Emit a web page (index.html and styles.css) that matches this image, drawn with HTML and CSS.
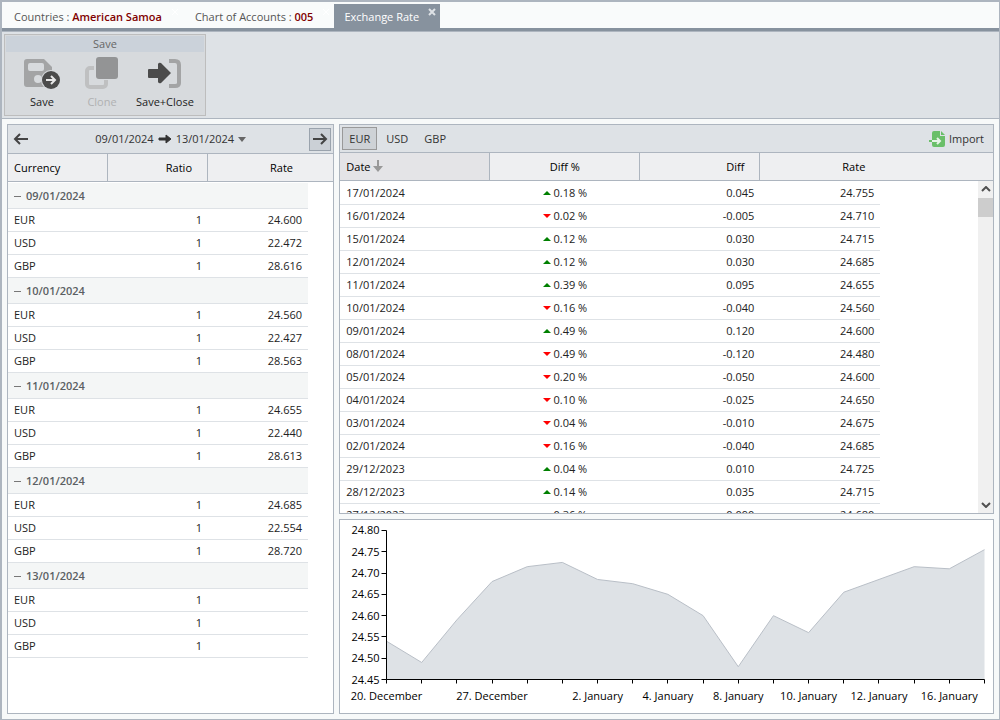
FILE: index.html
```html
<!DOCTYPE html>
<html lang="en">
<head>
    <meta charset="UTF-8">
    <meta name="viewport" content="width=device-width, initial-scale=1.0">
    <title>Exchange Rate</title>
    <link rel="stylesheet" href="styles.css">
</head>
<body>
    <nav class="tabs">
        <div class="tab">
            <a href="#countries">Countries : <b>American Samoa</b></a>
            <button class="tab-close" aria-label="Close Countries">
                <svg width="8" height="8" viewBox="0 0 8 8"><path d="M1 1l6 6M7 1l-6 6"/></svg>
            </button>
        </div>
        <div class="tab">
            <a href="#accounts">Chart of Accounts : <b>005</b></a>
            <button class="tab-close" aria-label="Close Chart of Accounts">
                <svg width="8" height="8" viewBox="0 0 8 8"><path d="M1 1l6 6M7 1l-6 6"/></svg>
            </button>
        </div>
        <div class="tab active">
            <a href="#rates">Exchange Rate</a>
            <button class="tab-close" aria-label="Close Exchange Rate">
                <svg width="8" height="8" viewBox="0 0 8 8"><path d="M1 1l6 6M7 1l-6 6"/></svg>
            </button>
        </div>
    </nav>

    <header class="ribbon">
        <section class="ribbon-group">
            <h2>Save</h2>
            <div class="ribbon-buttons">
                <button>
                    <svg width="40" height="36" viewBox="0 0 40 36">
                        <path fill="#a3a4a5" fill-rule="evenodd" d="M5 3h17l8 8v17q0 3-3 3H5q-3 0-3-3V6q0-3 3-3zM8 7q-2 0-2 2v4q0 2 2 2h12q2 0 2-2V9q0-2-2-2zM16 19a4 4 0 1 0 0 8a4 4 0 1 0 0-8z"/>
                        <circle cx="29" cy="24" r="10" fill="#d7dadd"/>
                        <circle cx="29" cy="24" r="9" fill="#4b4b4b"/>
                        <path d="M24 24h9M29 20l4 4-4 4" fill="none" stroke="#e8e8e8" stroke-width="2"/>
                    </svg>
                    <span>Save</span>
                </button>
                <button disabled>
                    <svg width="40" height="36" viewBox="0 0 40 36">
                        <rect x="5" y="12" width="19" height="19" rx="3" fill="none" stroke="#bfc0c1" stroke-width="4"/>
                        <rect x="12" y="0" width="24" height="24" rx="4" fill="#d7dadd"/>
                        <rect x="14" y="1" width="22" height="22" rx="3" fill="#939495"/>
                    </svg>
                    <span>Clone</span>
                </button>
                <button>
                    <svg width="40" height="36" viewBox="0 0 40 36">
                        <path d="M24 5h6q4 0 4 4v18q0 3-4 3h-6" fill="none" stroke="#a3a4a5" stroke-width="4"/>
                        <path d="M4 13h9V8q1-2 3-1l10 10-10 10q-2 1-3-1v-4H4q-1 0-1-1v-7q0-1 1-1z" fill="#4b4b4b"/>
                    </svg>
                    <span>Save+Close</span>
                </button>
            </div>
        </section>
    </header>

    <main class="content">
        <section class="panel">
            <div class="range-bar">
                <button class="step" aria-label="Previous period">
                    <svg width="16" height="14" viewBox="0 0 16 14"><path d="M15 7H2M7 2L2 7l5 5"/></svg>
                </button>
                <button class="range">
                    09/01/2024
                    <svg width="14" height="10" viewBox="0 0 14 10"><path d="M1 4h7V1l5 4-5 4V6H1z" fill="#333" stroke="#333"/></svg>
                    13/01/2024
                    <svg class="caret" width="8" height="5" viewBox="0 0 8 5"><path d="M0 0h8L4 5z" fill="#666"/></svg>
                </button>
                <button class="step next" aria-label="Next period">
                    <svg width="16" height="14" viewBox="0 0 16 14"><path d="M1 7h13M9 2l5 5-5 5"/></svg>
                </button>
            </div>
            <table class="grid currencies">
                <colgroup><col class="c100"><col class="c100"><col class="c100"><col></colgroup>
                <thead>
                    <tr><th>Currency</th><th class="num">Ratio</th><th class="num last">Rate</th><th></th></tr>
                </thead>
                <tbody id="currencyRows"></tbody>
            </table>
        </section>

        <div class="side">
            <section class="panel history">
                <div class="currency-bar">
                    <button class="selected">EUR</button>
                    <button>USD</button>
                    <button>GBP</button>
                    <button class="import">
                        <svg width="16" height="16" viewBox="0 0 16 16">
                            <path d="M5 0h6v5h5v9q0 2-2 2H5q-2 0-2-2V2q0-2 2-2z" fill="#6abf69"/>
                            <path d="M12 0l4 4h-4z" fill="#6abf69"/>
                            <path d="M0 10h3" stroke="#6abf69" stroke-width="2"/>
                            <path d="M3 10h8M8 7l3 3-3 3" fill="none" stroke="#e6f3e6" stroke-width="2"/>
                        </svg>
                        Import
                    </button>
                </div>
                <table class="grid rates">
                    <colgroup><col class="c150"><col class="c150"><col class="c120"><col class="c120"><col></colgroup>
                    <thead>
                        <tr>
                            <th class="sorted">Date
                                <svg width="10" height="12" viewBox="0 0 10 12"><path d="M4 0h2v6h4l-5 6-5-6h4z" fill="#999"/></svg>
                            </th>
                            <th class="mid">Diff %</th>
                            <th class="num">Diff</th>
                            <th class="num last">Rate</th>
                            <th></th>
                        </tr>
                    </thead>
                    <tbody id="rateRows"></tbody>
                </table>
                <div class="scrollbar">
                    <svg width="10" height="6" viewBox="0 0 10 6"><path d="M1 5l4-4 4 4"/></svg>
                    <div class="thumb"></div>
                    <svg width="10" height="6" viewBox="0 0 10 6"><path d="M1 1l4 4 4-4"/></svg>
                </div>
            </section>
            <section class="panel">
                <svg id="chart" class="chart" role="img" aria-label="EUR exchange rate"></svg>
            </section>
        </div>
    </main>

    <script src="script.js"></script>
</body>
</html>
```
FILE: styles.css
```css
* {
    box-sizing: border-box;
}

body {
    display: flex;
    flex-direction: column;
    height: 100vh;
    margin: 0;
    border: 1px solid #adb5bf;
    border-top-width: 2px;
    border-left-width: 2px;
    background-color: #f7f9f9;
    color: #222;
    font-family: "Open Sans", "Noto Sans", sans-serif;
    font-size: 11px;
    line-height: 16px;
}

button {
    margin: 0;
    padding: 0;
    border: 0;
    background: none;
    color: inherit;
    font: inherit;
    cursor: pointer;
}

/* Tabs */
.tabs {
    display: flex;
    padding-top: 2px;
    background-color: #f9fbfb;
    border-bottom: 3px solid #87929e;
}

.tab {
    display: flex;
    align-items: flex-start;
    gap: 9px;
    height: 24px;
    padding: 0 4px 0 12px;
}

.tab a {
    padding-top: 5px;
    color: #555;
    text-decoration: none;
}

.tab b {
    color: #800000;
    font-weight: 600;
}

.tab-close {
    display: flex;
    padding-top: 4px;
}

.tab-close svg {
    fill: none;
    stroke: #fff;
}

.tab.active {
    padding-left: 10px;
    background-color: #87929e;
}

.tab.active a {
    color: #fff;
}

.tab.active .tab-close svg {
    stroke: #dee2e6;
    stroke-width: 2;
}

/* Ribbon */
.ribbon {
    display: flex;
    padding: 2px;
    border-top: 1px solid #adb5bf;
    border-bottom: 1px solid #adb5bf;
    background-color: #dee2e6;
}

.ribbon-group {
    height: 82px;
    padding: 1px;
    border: 1px solid #bdbdbd;
    background-color: #d7dadd;
}

.ribbon-group h2 {
    margin: 0;
    background-color: #cbd2da;
    color: #666;
    font-size: 11px;
    font-weight: normal;
    text-align: center;
}

.ribbon-buttons {
    display: flex;
    padding: 0 6px;
}

.ribbon-buttons button {
    display: flex;
    flex-direction: column;
    align-items: center;
    gap: 2px;
    min-width: 60px;
    padding: 4px 4px 0;
}

.ribbon-buttons button:disabled {
    color: #b0b1b2;
}

/* Panels */
.content {
    display: grid;
    grid-template-columns: 1fr 2fr;
    gap: 5px;
    flex: 1;
    min-height: 0;
    padding: 5px;
}

.side {
    display: grid;
    grid-template-rows: 2fr 1fr;
    gap: 5px;
    min-height: 0;
}

.panel {
    position: relative;
    min-height: 0;
    overflow: hidden;
    border: 1px solid #adb5bf;
    background-color: #fff;
}

.range-bar,
.currency-bar {
    display: flex;
    align-items: center;
    height: 28px;
    padding: 2px;
    background-color: #dee2e6;
    color: #333;
}

.range-bar {
    justify-content: space-between;
}

.step {
    display: flex;
    align-items: center;
    justify-content: center;
    width: 22px;
    height: 23px;
}

.step svg {
    fill: none;
    stroke: #444;
    stroke-width: 2;
}

.step.next {
    border: 1px solid #9aa3ad;
    background-color: #cbd0d6;
}

.range {
    display: flex;
    align-items: center;
    gap: 4px;
}

.currency-bar {
    gap: 2px;
    height: 27px;
}

.currency-bar button {
    height: 23px;
    padding: 0 6px;
    border: 1px solid transparent;
}

.currency-bar .selected {
    border-color: #999;
    background-color: #ced2d6;
}

.currency-bar .import {
    display: flex;
    align-items: center;
    gap: 4px;
    margin-left: auto;
}

/* Grids */
.grid {
    width: 100%;
    border-collapse: separate;
    border-spacing: 0;
    table-layout: fixed;
}

.c100 {
    width: 100px;
}

.c120 {
    width: 120px;
}

.c150 {
    width: 150px;
}

.grid th {
    height: 29px;
    padding: 0 15px 0 6px;
    border: 1px solid #adb5bf;
    border-width: 1px 1px 1px 0;
    background-color: #eeeff1;
    color: #000;
    font-weight: normal;
    text-align: left;
}

.grid th.last,
.grid th:last-child {
    border-right: 0;
}

.grid th.sorted {
    background-color: #e4e4e7;
}

.grid th svg {
    vertical-align: -1px;
}

.grid td {
    height: 23px;
    padding: 0 6px;
    border-bottom: 1px solid #dee2e6;
}

.grid .group td {
    height: 26px;
    background-color: #f4f6f6;
    color: #5b5f63;
    font-weight: 600;
}

.grid td:last-child,
.grid .group td:last-child {
    padding: 0;
    border: 0;
    background-color: #fff;
}

/* Gap between the header and the first row */
.grid tbody tr:first-child td {
    height: 24px;
    border-top: 1px solid #fff;
}

.grid tbody tr.group:first-child td {
    height: 27px;
}

.grid .num {
    text-align: right;
}

.grid .mid {
    padding: 0;
    text-align: center;
}

.group svg {
    margin-right: 5px;
    vertical-align: 3px;
}

.rates td svg {
    margin-right: 2px;
    vertical-align: 2px;
}

/* Scrollbar lies over the free column of the grid */
.scrollbar {
    position: absolute;
    top: 56px;
    right: 0;
    bottom: 0;
    display: flex;
    flex-direction: column;
    align-items: center;
    width: 15px;
    padding: 5px 0;
    background-color: #f0f0f0;
}

.scrollbar svg {
    fill: none;
    stroke: #505050;
    stroke-width: 2;
}

.thumb {
    width: 15px;
    height: 19px;
    margin: 6px 0 auto;
    background-color: #cdcdcd;
}

/* Chart */
.chart {
    display: block;
    width: 100%;
    height: 100%;
}

.chart text {
    fill: #000;
    font-size: 11px;
}

.chart .axis {
    fill: none;
    stroke: #000;
}

.chart .area {
    fill: #dee2e6;
}

.chart .line {
    fill: none;
    stroke: #b9bfc7;
}
```
FILE: script.js
```js
const days = [
    { date: '09/01/2024', rates: ['24.600', '22.472', '28.616'] },
    { date: '10/01/2024', rates: ['24.560', '22.427', '28.563'] },
    { date: '11/01/2024', rates: ['24.655', '22.440', '28.613'] },
    { date: '12/01/2024', rates: ['24.685', '22.554', '28.720'] },
    { date: '13/01/2024', rates: ['', '', ''] }
];

const rateHistory = [
    ['17/01/2024', '0.18', '0.045', '24.755'],
    ['16/01/2024', '0.02', '-0.005', '24.710'],
    ['15/01/2024', '0.12', '0.030', '24.715'],
    ['12/01/2024', '0.12', '0.030', '24.685'],
    ['11/01/2024', '0.39', '0.095', '24.655'],
    ['10/01/2024', '0.16', '-0.040', '24.560'],
    ['09/01/2024', '0.49', '0.120', '24.600'],
    ['08/01/2024', '0.49', '-0.120', '24.480'],
    ['05/01/2024', '0.20', '-0.050', '24.600'],
    ['04/01/2024', '0.10', '-0.025', '24.650'],
    ['03/01/2024', '0.04', '-0.010', '24.675'],
    ['02/01/2024', '0.16', '-0.040', '24.685'],
    ['29/12/2023', '0.04', '0.010', '24.725'],
    ['28/12/2023', '0.14', '0.035', '24.715'],
    ['27/12/2023', '0.36', '0.090', '24.680']
];

const points = [24.54, 24.49, 24.59, 24.68, 24.715, 24.725, 24.685, 24.675, 24.65,
    24.6, 24.48, 24.6, 24.56, 24.655, 24.685, 24.715, 24.71, 24.755];

const labels = {
    0: '20. December', 3: '27. December', 6: '2. January', 8: '4. January',
    10: '8. January', 12: '10. January', 14: '12. January', 16: '16. January'
};

function showCurrencies() {
    const minus = '<svg width="7" height="1" viewBox="0 0 7 1"><path d="M0 0h7v1H0z" fill="#777"/></svg>';
    let html = '';

    days.forEach(day => {
        html += `<tr class="group"><td colspan="3">${minus}${day.date}</td><td></td></tr>`;
        ['EUR', 'USD', 'GBP'].forEach((code, i) => {
            html += `<tr><td>${code}</td><td class="num">1</td><td class="num">${day.rates[i]}</td><td></td></tr>`;
        });
    });
    document.getElementById('currencyRows').innerHTML = html;
}

function showHistory() {
    const up = '<svg width="8" height="4" viewBox="0 0 8 4"><path d="M0 4l4-4 4 4z" fill="#008000"/></svg>';
    const down = '<svg width="8" height="4" viewBox="0 0 8 4"><path d="M0 0h8L4 4z" fill="#f00"/></svg>';

    document.getElementById('rateRows').innerHTML = rateHistory.map(([date, percent, diff, rate]) => `
        <tr>
            <td>${date}</td>
            <td class="mid">${diff < 0 ? down : up}${percent} %</td>
            <td class="num">${diff}</td>
            <td class="num">${rate}</td>
            <td></td>
        </tr>`).join('');
}

function drawChart() {
    const chart = document.getElementById('chart');
    const left = 46.5;
    const top = 10.5;
    const right = chart.clientWidth - 8.5;
    const bottom = chart.clientHeight - 33.5;
    const x = i => left + i * (right - left) / (points.length - 1);
    const y = v => bottom - (v - 24.45) / 0.35 * (bottom - top);
    const snap = n => Math.floor(n) + 0.5;

    const line = points.map((v, i) => `${x(i)} ${y(v)}`).join('L');
    let axis = `M${left} ${top}V${bottom}H${right}`;
    let text = '';

    for (let i = 0; i <= 7; i++) {
        const value = 24.45 + i * 0.05;
        axis += `M${left} ${snap(y(value))}h-5`;
        text += `<text x="${left - 7}" y="${Math.round(y(value)) + 4}" text-anchor="end">${value.toFixed(2)}</text>`;
    }
    points.forEach((v, i) => {
        axis += `M${snap(x(i))} ${bottom}v4`;
        if (labels[i]) {
            text += `<text x="${x(i)}" y="${bottom + 20}" text-anchor="middle">${labels[i]}</text>`;
        }
    });

    chart.innerHTML = `
        <path class="area" d="M${left} ${bottom}L${line}V${bottom}z"/>
        <path class="line" d="M${line}"/>
        <path class="axis" d="${axis}"/>
        ${text}`;
}

showCurrencies();
showHistory();
drawChart();
window.addEventListener('resize', drawChart);
```
